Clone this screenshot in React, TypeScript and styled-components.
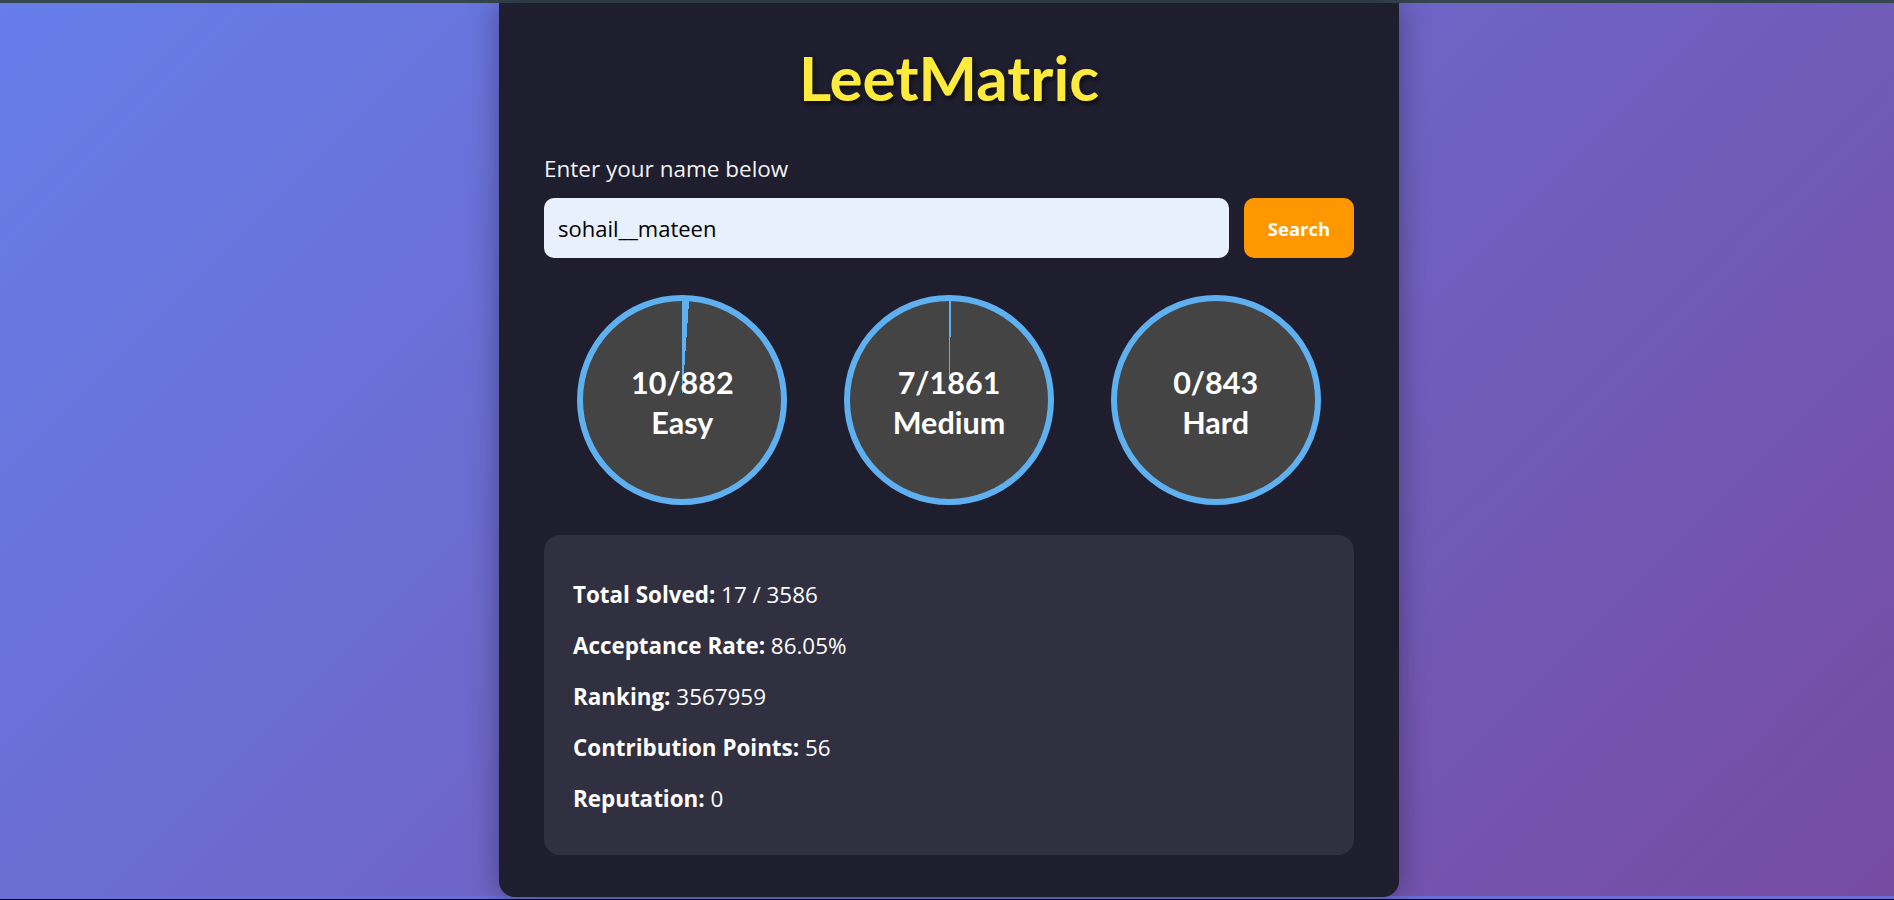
import styled, { createGlobalStyle } from 'styled-components';

const GlobalStyle = createGlobalStyle`
    html {
        background: #000;
    }
    body {
        margin: 0;
        font-family: "Open Sans", Lato, sans-serif;
    }
`;

const Page = styled.div`
    height: 899px;
    box-sizing: border-box;
    border-top: 3px solid #34464f;
    background: linear-gradient(135deg, #667eea 0%, #764ba2 100%) top / 100% 893px no-repeat, #6a6dd6;
    display: flex;
    flex-direction: column;
    align-items: center;
`;

const Card = styled.div`
    width: 900px;
    box-sizing: border-box;
    margin-left: 4px;
    padding: 32px 45px 42px;
    background-color: #1e1e2e;
    border-radius: 0 0 16px 16px;
    box-shadow: 0 0 30px rgba(0, 0, 0, 0.35);
    color: #f2f2f2;
`;

const Title = styled.h1`
    margin: 0;
    font-family: Lato, sans-serif;
    font-size: 62px;
    line-height: 84px;
    font-weight: 700;
    text-align: center;
    color: #ffeb3b;
    text-shadow: 2px 3px 5px rgba(0, 0, 0, 0.6);
`;

const Label = styled.p`
    margin: 36px 0 15px;
    font-size: 22.5px;
    line-height: 28px;
`;

const SearchRow = styled.div`
    display: flex;
    gap: 15px;
`;

const NameInput = styled.input`
    flex: 1;
    height: 60px;
    box-sizing: border-box;
    padding: 0 14px;
    border: none;
    border-radius: 10px;
    background-color: #e8f0fe;
    font-family: inherit;
    font-size: 22px;
    color: #000;
    outline: none;
`;

const SearchButton = styled.button`
    width: 110px;
    height: 60px;
    border: none;
    border-radius: 10px;
    background-color: #ff9800;
    color: #fff;
    font-family: inherit;
    font-size: 18.5px;
    font-weight: 700;
    cursor: pointer;
`;

const CircleRow = styled.div`
    margin-top: 37px;
    padding: 0 5px;
    display: grid;
    grid-template-columns: repeat(3, 1fr);
    justify-items: center;
`;

const Circle = styled.div<{ $progress: number }>`
    width: 210px;
    height: 210px;
    box-sizing: border-box;
    border: 6px solid #5fb0f0;
    border-radius: 50%;
    background: conic-gradient(#5fb0f0 ${p => p.$progress}%, #444444 0%);
    display: flex;
    flex-direction: column;
    align-items: center;
    justify-content: center;
    padding-top: 4px;
`;

const CircleText = styled.span`
    font-family: Lato, sans-serif;
    font-size: 30.5px;
    line-height: 40px;
    font-weight: 700;
    color: #fff;
`;

const StatsBox = styled.div`
    margin-top: 30px;
    padding: 45px 29px 41px;
    background-color: #313040;
    border-radius: 16px;
    display: flex;
    flex-direction: column;
    gap: 21px;
`;

const Stat = styled.p`
    margin: 0;
    font-size: 22.4px;
    line-height: 30px;
    color: #fff;
`;

const levels = [
    { solved: 10, total: 882, name: 'Easy' },
    { solved: 7, total: 1861, name: 'Medium' },
    { solved: 0, total: 843, name: 'Hard' },
];

const stats = [
    { label: 'Total Solved:', value: '17 / 3586' },
    { label: 'Acceptance Rate:', value: '86.05%' },
    { label: 'Ranking:', value: '3567959' },
    { label: 'Contribution Points:', value: '56' },
    { label: 'Reputation:', value: '0' },
];

const App = () => {
    return <Page>
        <GlobalStyle />
        <Card>
            <Title>LeetMatric</Title>
            <Label>Enter your name below</Label>
            <SearchRow>
                <NameInput defaultValue="sohail__mateen" />
                <SearchButton>Search</SearchButton>
            </SearchRow>
            <CircleRow>
                {levels.map(l => (
                    <Circle key={l.name} $progress={(l.solved / l.total) * 100}>
                        <CircleText>{l.solved}/{l.total}</CircleText>
                        <CircleText>{l.name}</CircleText>
                    </Circle>
                ))}
            </CircleRow>
            <StatsBox>
                {stats.map(s => (
                    <Stat key={s.label}><strong>{s.label}</strong> {s.value}</Stat>
                ))}
            </StatsBox>
        </Card>
    </Page>
}

export default App;
